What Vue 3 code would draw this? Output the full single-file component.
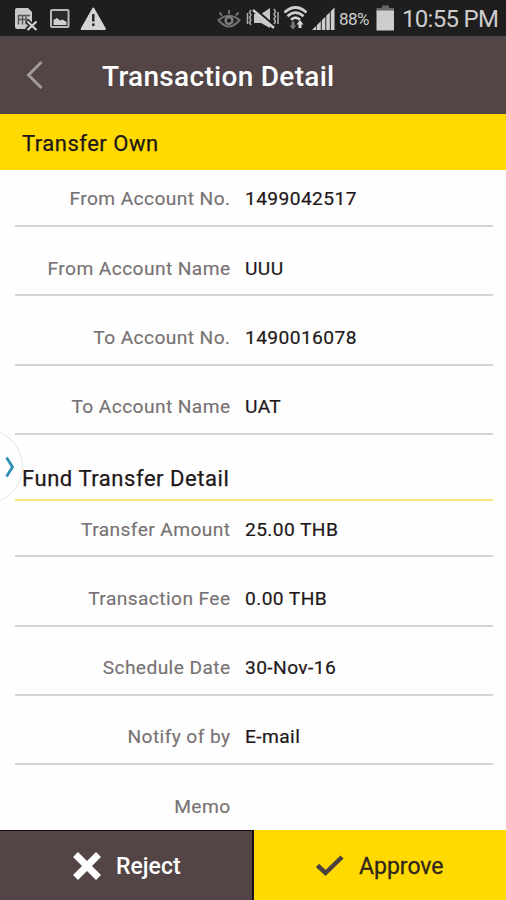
<template>
  <div class="screen">
    <!-- Status bar -->
    <div class="status-bar">
      <svg class="status-icons" width="120" height="36" viewBox="0 0 120 36">
        <path d="M15 10 Q15 8 17 8 H28 L32 12 V27 Q32 29 30 29 H17 Q15 29 15 27 Z" fill="#c9c9c9" />
        <path d="M18.5 15 V24.5 M22.5 15 V24.5 M26 15 V24.5 M18 15.5 H30 M18 19.5 H29" stroke="#555" stroke-width="1.4" fill="none" />
        <path d="M27 21 L36.5 30 M36.5 21 L27 30" stroke="#1e1e1e" stroke-width="5" />
        <path d="M27.5 21.5 L36.5 30 M36.5 21.5 L27.5 30" stroke="#d2d2d2" stroke-width="2.2" />
        <rect x="51" y="10" width="17.5" height="17" rx="1" fill="#292929" stroke="#b8b8b8" stroke-width="2" />
        <path d="M53.5 25 V20 L57 18 L60 20.5 L62.5 19.5 L66.5 22 V25 Z" fill="#d0d0d0" />
        <path d="M93.3 8.5 L105 29 H81.7 Z" fill="#d4d4d4" stroke="#d4d4d4" stroke-width="2" stroke-linejoin="round" />
        <path d="M93.3 14 V21.5 M93.3 23.5 V26" stroke="#222" stroke-width="2.4" />
      </svg>
      <div class="status-right">
        <svg width="122" height="36" viewBox="216 0 122 36">
          <g fill="none" stroke="#707070" stroke-width="2">
            <path d="M218.5 20 Q229 11.5 239.5 20 Q229 33 218.5 20 Z" />
            <path d="M219.5 12.5 L222 15.5 M229 10 V14 M238.5 12.5 L236 15.5" />
          </g>
          <circle cx="229" cy="20.5" r="3.4" fill="none" stroke="#808080" stroke-width="2.4" />
          <path d="M254 14 H261 L270 8 V28 L261 23 H254 Z" fill="#c8c8c8" />
          <path d="M255 9.5 L275 27" stroke="#1e1e1e" stroke-width="3" />
          <path d="M253 10 L274 28" stroke="#cfcfcf" stroke-width="2.4" />
          <path d="M251 10 L249.5 12.5 L251 15 L249.5 17.5 L251 20 L249.5 22.5 L251 25 M247.5 13 V24 M274 9 L275.5 11.5 L274 14 L275.5 16.5 L274 19 L275.5 21.5 L274 24 M278 12 V24" fill="none" stroke="#aaa" stroke-width="1.5" />
          <g fill="none" stroke="#cfcfcf" stroke-width="2.7">
            <path d="M284.5 12.5 Q295.5 2.5 306.5 12.5" />
            <path d="M287.5 16.2 Q295.5 9 303.5 16.2" />
            <path d="M291 19.8 Q295.5 15.5 300 19.8" />
          </g>
          <path d="M291.5 21.5 H294.5 V25.5 H296.5 L293 29.5 L289.5 25.5 H291.5 Z" fill="#777" />
          <path d="M298.5 28 V24.5 H296.5 L300 20 L303.5 24.5 H301.5 V28 Z" fill="#d5d5d5" />
          <path d="M312 30 L316.3 25.7 V30 Z M317 30 V25 L320.8 21.2 V30 Z M321.8 30 V20.2 L325.3 16.7 V30 Z M326.3 30 V15.7 L329.8 12.2 V30 Z M330.8 30 V11.2 L334.5 7.5 V30 Z" fill="#cfcfcf" />
        </svg>
        <span class="battery-level">88%</span>
        <svg class="battery" width="19" height="36" viewBox="376 0 19 36">
          <path d="M382 5.5 H389 V8 H394 V12 H376.5 V8 H382 Z" fill="#666" />
          <rect x="376.5" y="10.5" width="17.5" height="20" fill="#cdcdcd" />
        </svg>
        <span class="clock">10:55 PM</span>
      </div>
    </div>

    <!-- Header -->
    <div class="header">
      <svg class="back-icon" width="18" height="30" viewBox="0 0 18 30">
        <path d="M16.5 2 L3.5 15 L16.5 28" fill="none" stroke="#a39a9a" stroke-width="3" />
      </svg>
      <h1 class="header-title">Transaction Detail</h1>
    </div>

    <div class="section-banner">Transfer Own</div>

    <!-- Details -->
    <div class="content">
      <div class="rows">
        <div v-for="row in accountRows" :key="row.label" class="row">
          <span class="row-label">{{ row.label }}</span>
          <span class="row-value">{{ row.value }}</span>
        </div>
      </div>

      <h2 class="section-title">Fund Transfer Detail</h2>

      <div class="rows">
        <div v-for="row in transferRows" :key="row.label" class="row">
          <span class="row-label">{{ row.label }}</span>
          <span class="row-value">{{ row.value }}</span>
        </div>
      </div>
    </div>

    <!-- Drawer handle, lies over the list -->
    <div class="drawer-handle">
      <svg width="10" height="22" viewBox="0 0 10 22">
        <path d="M1.5 1.5 L7.5 11 L1.5 20.5" fill="none" stroke="#2e8fb0" stroke-width="2.8" />
      </svg>
    </div>

    <!-- Actions -->
    <div class="actions">
      <button class="action reject" type="button">
        <svg class="reject-icon" width="30" height="30" viewBox="0 0 30 30">
          <path d="M3.5 3.5 L26.5 26.5 M26.5 3.5 L3.5 26.5" stroke="#fff" stroke-width="7" />
        </svg>
        <span>Reject</span>
      </button>
      <button class="action approve" type="button">
        <svg class="approve-icon" width="28" height="22" viewBox="0 0 28 22">
          <path d="M1.5 10.5 L9.5 18 L26 2" fill="none" stroke="#4b4040" stroke-width="4.5" />
        </svg>
        <span>Approve</span>
      </button>
    </div>
  </div>
</template>

<script setup>
const accountRows = [
  { label: 'From Account No.', value: '1499042517' },
  { label: 'From Account Name', value: 'UUU' },
  { label: 'To Account No.', value: '1490016078' },
  { label: 'To Account Name', value: 'UAT' }
]

const transferRows = [
  { label: 'Transfer Amount', value: '25.00 THB' },
  { label: 'Transaction Fee', value: '0.00 THB' },
  { label: 'Schedule Date', value: '30-Nov-16' },
  { label: 'Notify of by', value: 'E-mail' },
  { label: 'Memo', value: '' }
]
</script>

<style>
body {
  margin: 0;
  overflow: hidden;
}
</style>

<style scoped>
.screen {
  position: relative;
  display: flex;
  flex-direction: column;
  width: 506px;
  height: 900px;
  overflow: hidden;
  background: #fefefe;
  font-family: Roboto, "Liberation Sans", sans-serif;
  color: #211719;
}

.status-bar {
  display: flex;
  justify-content: space-between;
  flex: none;
  height: 36px;
  background: #1e1e1e;
  color: #cdcdcd;
}

.status-right {
  display: flex;
  align-items: center;
  padding-right: 8px;
}

.battery-level {
  width: 38px;
  padding-left: 1px;
  box-sizing: border-box;
  padding-top: 1px;
  font-size: 17px;
  letter-spacing: -0.5px;
}

.clock {
  width: 96px;
  margin-left: 7px;
  padding-top: 1px;
  font-size: 24px;
  letter-spacing: -0.7px;
  white-space: nowrap;
}

.header {
  display: flex;
  align-items: center;
  flex: none;
  box-sizing: border-box;
  height: 78px;
  padding-left: 25px;
  padding-top: 2px;
  background: #534545;
}

.back-icon {
  margin-top: -2px;
}

.header-title {
  margin: 0 0 0 59px;
  font-size: 28px;
  font-weight: 500;
  letter-spacing: 0.3px;
  color: #fff;
}

.section-banner {
  flex: none;
  box-sizing: border-box;
  height: 56px;
  padding-left: 22px;
  background: #ffd900;
  font-size: 22px;
  line-height: 59px;
  letter-spacing: 0.5px;
  -webkit-text-stroke: 0.25px;
}

.content {
  flex: 1;
  min-height: 0;
  overflow: hidden;
  padding: 0 13px 0 15px;
}

.row {
  display: flex;
  align-items: flex-end;
  box-sizing: border-box;
  height: 69.3px;
  padding-bottom: 14.8px;
  border-bottom: 2px solid #d4d4d4;
  font-size: 19.2px;
  line-height: 22px;
  letter-spacing: 0.4px;
}

.row:first-child {
  height: 57px;
}

.row-label {
  width: 215.5px;
  margin-right: 14.5px;
  text-align: right;
  color: #777273;
  -webkit-text-stroke: 0.15px;
}

.row-value {
  -webkit-text-stroke: 0.2px;
}

.section-title {
  box-sizing: border-box;
  height: 66px;
  margin: 0;
  padding: 31px 0 0 7px;
  border-bottom: 2px solid #fbe27a;
  font-size: 22px;
  font-weight: 400;
  line-height: 26px;
  letter-spacing: 0.55px;
  -webkit-text-stroke: 0.25px;
}

.section-title + .rows .row:first-child {
  height: 56.5px;
}

.drawer-handle {
  position: absolute;
  top: 429px;
  left: -52px;
  display: flex;
  align-items: center;
  justify-content: flex-end;
  box-sizing: border-box;
  width: 75px;
  height: 75px;
  padding-right: 7px;
  border: 1px solid #e3e3e3;
  border-radius: 50%;
}

.actions {
  display: grid;
  grid-template-columns: 254px 1fr;
  flex: none;
  height: 70px;
}

.action {
  display: flex;
  align-items: center;
  box-sizing: border-box;
  padding: 2px 0 0;
  border: 0;
  font-family: inherit;
  font-size: 23px;
}

.reject {
  padding-left: 72px;
  padding-top: 1px;
  border-top: 1px solid #120b0c;
  border-right: 2px solid #1b1014;
  background: #534545;
  color: #fff;
  font-weight: 500;
}

.reject-icon {
  margin-right: 14px;
}

.approve {
  padding-left: 62px;
  background: #ffd900;
  color: #30261c;
  -webkit-text-stroke: 0.3px;
}

.approve-icon {
  margin-right: 15px;
}
</style>
